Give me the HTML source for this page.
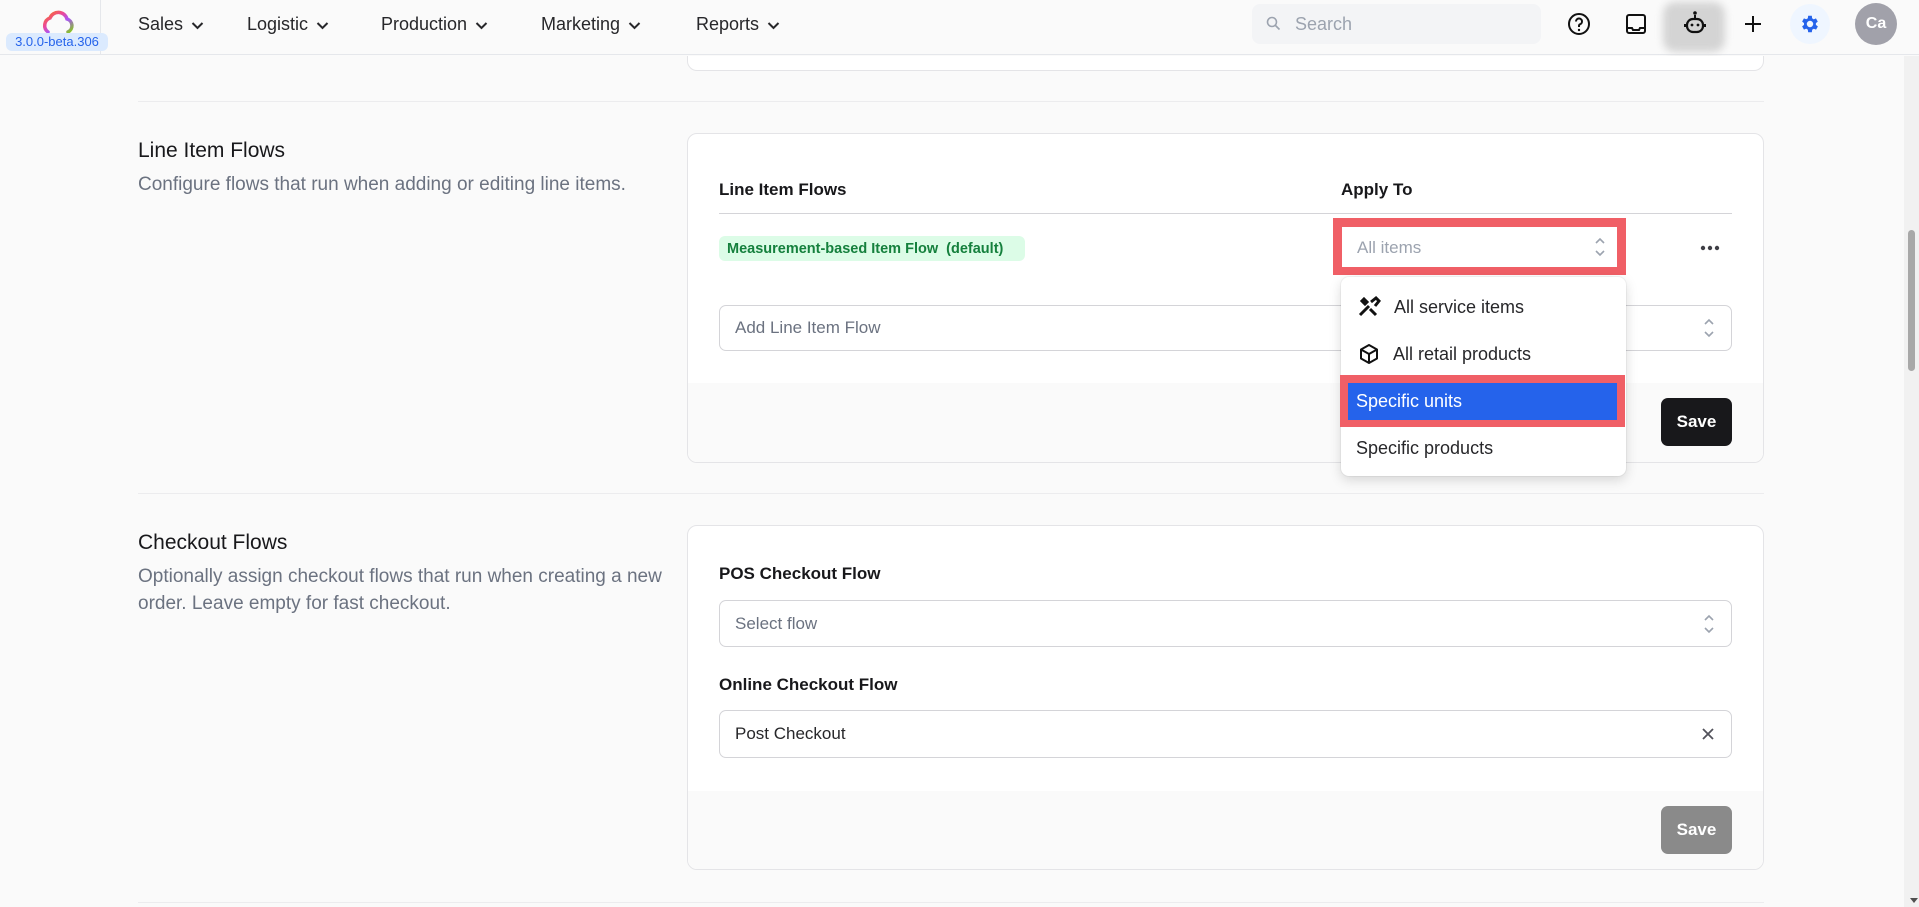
<!DOCTYPE html>
<html><head><meta charset="utf-8"><style>
*{box-sizing:border-box;margin:0;padding:0}
body{width:1919px;height:907px;overflow:hidden;background:#fafafa;font-family:"Liberation Sans",sans-serif;color:#18181b;position:relative}
.a{position:absolute}
.hdr{left:0;top:0;width:1919px;height:55px;border-bottom:1px solid #e5e7eb;background:#fafafa}
.nav{top:14px;font-size:18px;color:#27272a}
.nav svg{vertical-align:middle;margin-left:8px}
.card{background:#fff;border:1px solid #e4e4e7;border-radius:10px;overflow:hidden}
.lbl{font-size:17px;font-weight:bold;color:#18181b}
.inp{background:#fff;border:1px solid #d4d4d8;border-radius:7px;font-size:17px;color:#6b7280;padding-left:15px;display:flex;align-items:center}
.sel-ar{position:absolute;right:16px;top:50%;transform:translateY(-50%)}
.btn{border-radius:7px;color:#fff;font-weight:bold;font-size:17px;display:flex;align-items:center;justify-content:center}
.ttl{font-size:21px;color:#18181b}
.desc{font-size:19px;color:#6b7280;line-height:27px}
.mi{font-size:18px;color:#27272a;display:flex;align-items:center}
</style></head><body>
<div class="a hdr"></div>
<div class="a" style="left:100px;top:0;width:1px;height:55px;background:#e5e7eb"></div>
<svg class="a" style="left:38px;top:8px" width="40" height="28" viewBox="0 0 40 28"><defs><linearGradient id="g" x1="0" y1="0" x2="1" y2="1"><stop offset="0" stop-color="#f97316"/><stop offset=".35" stop-color="#ec4899"/><stop offset=".6" stop-color="#a855f7"/><stop offset="1" stop-color="#84cc16"/></linearGradient></defs><path d="M10 24 A8 8 0 0 1 12 10 A9 9 0 0 1 29 11 A7 7 0 0 1 30 24" fill="none" stroke="url(#g)" stroke-width="3.5" stroke-linecap="round"/></svg>
<div class="a" style="left:6px;top:33px;width:102px;height:18px;background:#dbeafe;border-radius:6px;font-size:13px;color:#2563eb;text-align:center;line-height:18px">3.0.0-beta.306</div>
<div class="a nav" style="left:138px">Sales<svg width="13" height="9" viewBox="0 0 13 9"><path d="M1.5 2l5 5 5-5" fill="none" stroke="#27272a" stroke-width="2"/></svg></div>
<div class="a nav" style="left:247px">Logistic<svg width="13" height="9" viewBox="0 0 13 9"><path d="M1.5 2l5 5 5-5" fill="none" stroke="#27272a" stroke-width="2"/></svg></div>
<div class="a nav" style="left:381px">Production<svg width="13" height="9" viewBox="0 0 13 9"><path d="M1.5 2l5 5 5-5" fill="none" stroke="#27272a" stroke-width="2"/></svg></div>
<div class="a nav" style="left:541px">Marketing<svg width="13" height="9" viewBox="0 0 13 9"><path d="M1.5 2l5 5 5-5" fill="none" stroke="#27272a" stroke-width="2"/></svg></div>
<div class="a nav" style="left:696px">Reports<svg width="13" height="9" viewBox="0 0 13 9"><path d="M1.5 2l5 5 5-5" fill="none" stroke="#27272a" stroke-width="2"/></svg></div>
<div class="a" style="left:1252px;top:4px;width:289px;height:40px;background:#f3f4f6;border-radius:8px;font-size:18px;color:#9ca3af;padding:10px 0 0 43px">Search</div>
<svg class="a" style="left:1266px;top:16px" width="15" height="15" viewBox="0 0 15 15"><circle cx="6" cy="6" r="4.5" fill="none" stroke="#9ca3af" stroke-width="1.6"/><path d="M9.5 9.5l4 4" stroke="#9ca3af" stroke-width="1.6"/></svg>
<svg class="a" style="left:1567px;top:12px" width="24" height="24" viewBox="0 0 24 24"><circle cx="12" cy="12" r="10" fill="none" stroke="#111" stroke-width="2"/><path d="M9 9.5a3 3 0 1 1 4 2.8c-.7.3-1 .8-1 1.5V15" fill="none" stroke="#111" stroke-width="2"/><circle cx="12" cy="18" r="1.2" fill="#111"/></svg>
<svg class="a" style="left:1624px;top:12px" width="24" height="24" viewBox="0 0 24 24"><rect x="3" y="3" width="18" height="18" rx="2" fill="none" stroke="#111" stroke-width="2"/><path d="M3 16h5l1 2h6l1-2h5" fill="none" stroke="#111" stroke-width="2"/></svg>
<div class="a" style="left:1663px;top:2px;width:62px;height:50px;background:#d4d4d4;border-radius:12px;filter:blur(4px)"></div>
<svg class="a" style="left:1682px;top:10px" width="26" height="26" viewBox="0 0 26 26"><circle cx="13" cy="3" r="1.8" fill="#111"/><path d="M13 5v3" stroke="#111" stroke-width="2"/><rect x="5" y="9" width="16" height="13" rx="6" fill="none" stroke="#111" stroke-width="2.2"/><circle cx="10" cy="15" r="1.4" fill="#111"/><circle cx="16" cy="15" r="1.4" fill="#111"/><path d="M3 14v3M23 14v3" stroke="#111" stroke-width="2"/></svg>
<svg class="a" style="left:1743px;top:14px" width="20" height="20" viewBox="0 0 20 20"><path d="M10 2v16M2 10h16" stroke="#111" stroke-width="2"/></svg>
<div class="a" style="left:1790px;top:4px;width:40px;height:40px;border-radius:50%;background:#eff6ff"></div>
<svg class="a" style="left:1799px;top:13px" width="22" height="22" viewBox="0 0 24 24"><path fill="#2563eb" d="M19.4 13a7.5 7.5 0 0 0 0-2l2.1-1.6-2-3.5-2.5 1a7.6 7.6 0 0 0-1.7-1L15 3h-4l-.4 2.8a7.6 7.6 0 0 0-1.7 1l-2.5-1-2 3.5L6.5 11a7.5 7.5 0 0 0 0 2l-2.1 1.6 2 3.5 2.5-1c.5.4 1.1.7 1.7 1L11 21h4l.4-2.8c.6-.3 1.2-.6 1.7-1l2.5 1 2-3.5zM13 15.5a3.5 3.5 0 1 1 0-7 3.5 3.5 0 0 1 0 7z" transform="translate(-1 0)"/></svg>
<div class="a" style="left:1855px;top:3px;width:42px;height:42px;border-radius:50%;background:#a1a1aa;color:#fff;font-weight:bold;font-size:16px;text-align:center;line-height:42px">Ca</div>
<!-- scrollbar -->
<div class="a" style="left:1904px;top:56px;width:15px;height:851px;background:#f1f1f1"></div>
<div class="a" style="left:1908px;top:230px;width:7px;height:141px;background:#a8a8a8;border-radius:4px"></div>
<div class="a" style="left:1910px;top:898px;width:0;height:0;border-left:4px solid transparent;border-right:4px solid transparent;border-top:5px solid #505050"></div>
<!-- top card fragment -->
<div class="a card" style="left:687px;top:56px;width:1077px;height:15px;border-top:none;border-radius:0 0 10px 10px"></div>
<div class="a" style="left:138px;top:101px;width:1626px;height:1px;background:#ececee"></div>
<!-- section 1 -->
<div class="a ttl" style="left:138px;top:139px">Line Item Flows</div>
<div class="a desc" style="left:138px;top:171px">Configure flows that run when adding or editing line items.</div>
<div class="a card" style="left:687px;top:133px;width:1077px;height:330px">
 <div class="a" style="left:0;top:249px;width:1077px;height:81px;background:#fafafa"></div>
</div>
<div class="a lbl" style="left:719px;top:180px">Line Item Flows</div>
<div class="a lbl" style="left:1341px;top:180px">Apply To</div>
<div class="a" style="left:719px;top:213px;width:1013px;height:1px;background:#d4d4d8"></div>
<div class="a" style="left:719px;top:236px;width:306px;height:25px;background:#dcfce7;border-radius:6px;font-size:14.5px;font-weight:bold;color:#15803d;padding:5px 0 0 8px;white-space:pre">Measurement-based Item Flow  (default)</div>
<div class="a" style="left:1333px;top:218px;width:293px;height:57px;background:#f05f66"></div>
<div class="a" style="left:1342px;top:227px;width:275px;height:40px;background:#fff;font-size:17px;color:#9ca3af;padding:11px 0 0 15px">All items</div>
<svg class="a" style="left:1594px;top:236px" width="12" height="22" viewBox="0 0 12 22"><path d="M2 7l4-4 4 4M2 15l4 4 4-4" fill="none" stroke="#9ca3af" stroke-width="1.6"/></svg>
<svg class="a" style="left:1700px;top:245px" width="20" height="6"><circle cx="3" cy="3" r="2.2" fill="#3f3f46"/><circle cx="10" cy="3" r="2.2" fill="#3f3f46"/><circle cx="17" cy="3" r="2.2" fill="#3f3f46"/></svg>
<div class="a inp" style="left:719px;top:305px;width:1013px;height:46px">Add Line Item Flow
<svg class="sel-ar" width="12" height="22" viewBox="0 0 12 22"><path d="M2 7l4-4 4 4M2 15l4 4 4-4" fill="none" stroke="#9ca3af" stroke-width="1.6"/></svg></div>
<div class="a btn" style="left:1661px;top:398px;width:71px;height:48px;background:#18181b">Save</div>
<!-- dropdown -->
<div class="a" style="left:1341px;top:277px;width:285px;height:199px;background:#fff;border-radius:8px;box-shadow:0 4px 12px rgba(0,0,0,.15),0 0 0 1px rgba(0,0,0,.04)"></div>
<div class="a mi" style="left:1357px;top:295px;height:24px"><svg width="24" height="22" viewBox="0 0 24 22" style="margin-right:13px"><path d="M3 19l9-9M14 6l5-4 3 3-4 5M7 3l3 3-2 2-3-3zM13 13l6 6" stroke="#111" stroke-width="3" fill="none"/></svg>All service items</div>
<div class="a mi" style="left:1358px;top:342px;height:24px"><svg width="22" height="22" viewBox="0 0 22 22" style="margin-right:13px"><path d="M11 2l8 4.5v9L11 20l-8-4.5v-9zM3 6.5l8 4.5 8-4.5M11 11v9" fill="none" stroke="#111" stroke-width="2" stroke-linejoin="round"/></svg>All retail products</div>
<div class="a" style="left:1340px;top:375px;width:285px;height:52px;background:#f05f66"></div>
<div class="a" style="left:1348px;top:383px;width:269px;height:37px;background:#2563eb;color:#fff;font-size:18px;padding:8px 0 0 8px">Specific units</div>
<div class="a mi" style="left:1356px;top:438px">Specific products</div>
<!-- section 2 -->
<div class="a" style="left:138px;top:493px;width:1626px;height:1px;background:#ececee"></div>
<div class="a ttl" style="left:138px;top:531px">Checkout Flows</div>
<div class="a desc" style="left:138px;top:563px;width:540px">Optionally assign checkout flows that run when creating a new order. Leave empty for fast checkout.</div>
<div class="a card" style="left:687px;top:525px;width:1077px;height:345px">
 <div class="a" style="left:0;top:265px;width:1077px;height:80px;background:#fafafa"></div>
</div>
<div class="a lbl" style="left:719px;top:564px">POS Checkout Flow</div>
<div class="a inp" style="left:719px;top:600px;width:1013px;height:47px">Select flow
<svg class="sel-ar" width="12" height="22" viewBox="0 0 12 22"><path d="M2 7l4-4 4 4M2 15l4 4 4-4" fill="none" stroke="#9ca3af" stroke-width="1.6"/></svg></div>
<div class="a lbl" style="left:719px;top:675px">Online Checkout Flow</div>
<div class="a inp" style="left:719px;top:710px;width:1013px;height:48px;color:#27272a">Post Checkout
<svg class="sel-ar" width="14" height="14" viewBox="0 0 14 14"><path d="M2 2l10 10M12 2L2 12" stroke="#52525b" stroke-width="1.8"/></svg></div>
<div class="a btn" style="left:1661px;top:806px;width:71px;height:48px;background:#8a8a8a">Save</div>
<div class="a" style="left:138px;top:902px;width:1626px;height:1px;background:#ececee"></div>
</body></html>
